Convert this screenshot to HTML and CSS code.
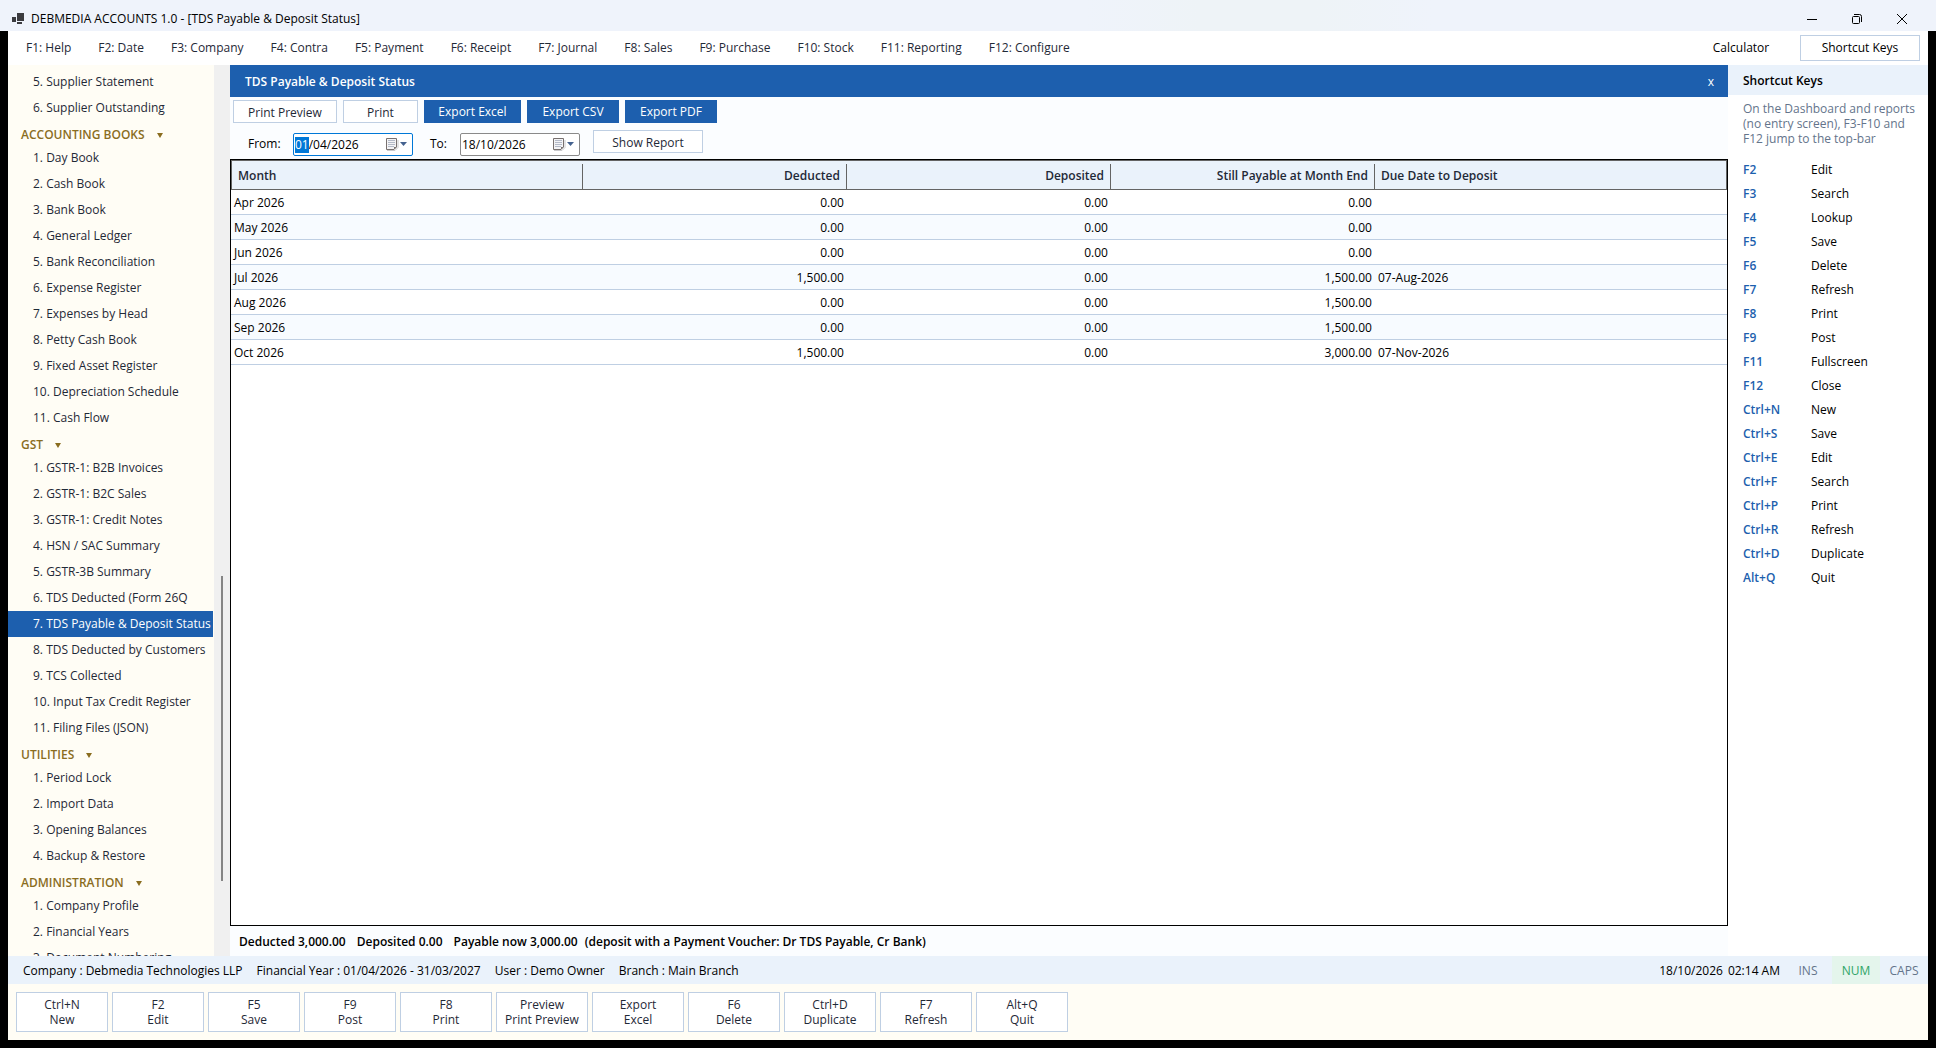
FILE: index.html
```html
<!DOCTYPE html>
<html lang="en">
<head>
<meta charset="utf-8">
<title>DEBMEDIA ACCOUNTS 1.0 - [TDS Payable &amp; Deposit Status]</title>
<link rel="stylesheet" href="styles.css">
</head>
<body>
<header class="titlebar">
  <svg class="app-icon" width="12" height="12" viewBox="0 0 12 12" aria-hidden="true"><path d="M0 4h4v5H0zM5 0h7v8H5zM5 9h5v2H5z" fill="#3b3b3f"/></svg>
  <h1 class="app-title">DEBMEDIA ACCOUNTS 1.0 - [TDS Payable &amp; Deposit Status]</h1>
  <button class="win-btn" type="button" aria-label="Minimize"><svg width="12" height="12" viewBox="0 0 12 12"><path d="M1 6.5h10" stroke="#000" fill="none"/></svg></button>
  <button class="win-btn" type="button" aria-label="Restore"><svg width="12" height="12" viewBox="0 0 12 12"><path d="M3 1.500H8.500Q10.500 1.500 10.500 3.500V9M2.500 3.500h5q1 0 1 1v5q0 1-1 1h-5q-1 0-1-1v-5q0-1 1-1z" stroke="#000" fill="none"/></svg></button>
  <button class="win-btn" type="button" aria-label="Close"><svg width="12" height="12" viewBox="0 0 12 12"><path d="M1 1l10 10M11 1L1 11" stroke="#000" fill="none"/></svg></button>
</header>

<div class="window">
  <nav class="menubar" aria-label="Main menu">
    <button type="button" class="menu-item">F1: Help</button>
    <button type="button" class="menu-item">F2: Date</button>
    <button type="button" class="menu-item">F3: Company</button>
    <button type="button" class="menu-item">F4: Contra</button>
    <button type="button" class="menu-item">F5: Payment</button>
    <button type="button" class="menu-item">F6: Receipt</button>
    <button type="button" class="menu-item">F7: Journal</button>
    <button type="button" class="menu-item">F8: Sales</button>
    <button type="button" class="menu-item">F9: Purchase</button>
    <button type="button" class="menu-item">F10: Stock</button>
    <button type="button" class="menu-item">F11: Reporting</button>
    <button type="button" class="menu-item">F12: Configure</button>
    <button type="button" class="tool-item">Calculator</button>
    <button type="button" class="tool-item tool-item-active">Shortcut Keys</button>
  </nav>

  <div class="workspace">
    <aside class="sidebar">
      <nav class="tree" aria-label="Reports">
        <a class="leaf" href="#">5. Supplier Statement</a>
        <a class="leaf" href="#">6. Supplier Outstanding</a>
        <button type="button" class="group">ACCOUNTING BOOKS<span class="caret"></span></button>
        <a class="leaf" href="#">1. Day Book</a>
        <a class="leaf" href="#">2. Cash Book</a>
        <a class="leaf" href="#">3. Bank Book</a>
        <a class="leaf" href="#">4. General Ledger</a>
        <a class="leaf" href="#">5. Bank Reconciliation</a>
        <a class="leaf" href="#">6. Expense Register</a>
        <a class="leaf" href="#">7. Expenses by Head</a>
        <a class="leaf" href="#">8. Petty Cash Book</a>
        <a class="leaf" href="#">9. Fixed Asset Register</a>
        <a class="leaf" href="#">10. Depreciation Schedule</a>
        <a class="leaf" href="#">11. Cash Flow</a>
        <button type="button" class="group">GST<span class="caret"></span></button>
        <a class="leaf" href="#">1. GSTR-1: B2B Invoices</a>
        <a class="leaf" href="#">2. GSTR-1: B2C Sales</a>
        <a class="leaf" href="#">3. GSTR-1: Credit Notes</a>
        <a class="leaf" href="#">4. HSN / SAC Summary</a>
        <a class="leaf" href="#">5. GSTR-3B Summary</a>
        <a class="leaf" href="#">6. TDS Deducted (Form 26Q</a>
        <a class="leaf leaf-active" href="#" aria-current="page">7. TDS Payable &amp; Deposit Status</a>
        <a class="leaf" href="#">8. TDS Deducted by Customers</a>
        <a class="leaf" href="#">9. TCS Collected</a>
        <a class="leaf" href="#">10. Input Tax Credit Register</a>
        <a class="leaf" href="#">11. Filing Files (JSON)</a>
        <button type="button" class="group">UTILITIES<span class="caret"></span></button>
        <a class="leaf" href="#">1. Period Lock</a>
        <a class="leaf" href="#">2. Import Data</a>
        <a class="leaf" href="#">3. Opening Balances</a>
        <a class="leaf" href="#">4. Backup &amp; Restore</a>
        <button type="button" class="group">ADMINISTRATION<span class="caret"></span></button>
        <a class="leaf" href="#">1. Company Profile</a>
        <a class="leaf" href="#">2. Financial Years</a>
        <a class="leaf" href="#">3. Document Numbering</a>
      </nav>
      <div class="scroll-track"><div class="scroll-thumb"></div></div>
    </aside>

    <main class="report">
      <div class="report-head">
        <h2 class="report-title">TDS Payable &amp; Deposit Status</h2>
        <button type="button" class="report-close" aria-label="Close report">x</button>
      </div>
      <div class="toolbar">
        <button type="button" class="btn btn-wide">Print Preview</button>
        <button type="button" class="btn btn-small">Print</button>
        <button type="button" class="btn btn-primary btn-excel">Export Excel</button>
        <button type="button" class="btn btn-primary">Export CSV</button>
        <button type="button" class="btn btn-primary">Export PDF</button>
      </div>
      <form class="filters">
        <label class="filter-label" for="from">From:</label>
        <div class="date date-focus">
          <input class="date-input" id="from" type="text" value="01/04/2026">
          <button type="button" class="date-drop" aria-label="Choose from date"><svg width="22" height="15" viewBox="0 0 22 15"><path d="M2 13.500h8l3-3V3" stroke="#c9c9cc" fill="none"/><path d="M1.500 1.500h10v8.500l-2.500 2.500h-7.500z" fill="#f3f3f5" stroke="#77706f"/><path d="M3 3h7v1H3zM3 5h7v1H3zM3 7h7v1H3zM3 9h6v1H3z" fill="#b4bac8"/><path d="M9 12.500V10h2.500z" fill="#77706f"/><path d="M15 5h7l-3.500 4z" fill="#44628f"/></svg></button>
        </div>
        <label class="filter-label" for="to">To:</label>
        <div class="date">
          <input class="date-input" id="to" type="text" value="18/10/2026">
          <button type="button" class="date-drop" aria-label="Choose to date"><svg width="22" height="15" viewBox="0 0 22 15"><path d="M2 13.500h8l3-3V3" stroke="#c9c9cc" fill="none"/><path d="M1.500 1.500h10v8.500l-2.500 2.500h-7.500z" fill="#f3f3f5" stroke="#77706f"/><path d="M3 3h7v1H3zM3 5h7v1H3zM3 7h7v1H3zM3 9h6v1H3z" fill="#b4bac8"/><path d="M9 12.500V10h2.500z" fill="#77706f"/><path d="M15 5h7l-3.500 4z" fill="#44628f"/></svg></button>
        </div>
        <button type="button" class="btn btn-show">Show Report</button>
      </form>
      <div class="grid">
        <table class="table">
          <colgroup><col class="col-outer"><col class="col-amount"><col class="col-amount"><col class="col-amount"><col class="col-outer"></colgroup>
          <thead>
            <tr><th scope="col">Month</th><th scope="col" class="num">Deducted</th><th scope="col" class="num">Deposited</th><th scope="col" class="num">Still Payable at Month End</th><th scope="col">Due Date to Deposit</th></tr>
          </thead>
          <tbody>
            <tr><td>Apr 2026</td><td class="num">0.00</td><td class="num">0.00</td><td class="num">0.00</td><td></td></tr>
            <tr><td>May 2026</td><td class="num">0.00</td><td class="num">0.00</td><td class="num">0.00</td><td></td></tr>
            <tr><td>Jun 2026</td><td class="num">0.00</td><td class="num">0.00</td><td class="num">0.00</td><td></td></tr>
            <tr><td>Jul 2026</td><td class="num">1,500.00</td><td class="num">0.00</td><td class="num">1,500.00</td><td>07-Aug-2026</td></tr>
            <tr><td>Aug 2026</td><td class="num">0.00</td><td class="num">0.00</td><td class="num">1,500.00</td><td></td></tr>
            <tr><td>Sep 2026</td><td class="num">0.00</td><td class="num">0.00</td><td class="num">1,500.00</td><td></td></tr>
            <tr><td>Oct 2026</td><td class="num">1,500.00</td><td class="num">0.00</td><td class="num">3,000.00</td><td>07-Nov-2026</td></tr>
          </tbody>
        </table>
      </div>
      <div class="totals">
        <span>Deducted 3,000.00</span>
        <span>Deposited 0.00</span>
        <span>Payable now 3,000.00</span>
        <span class="totals-note">(deposit with a Payment Voucher: Dr TDS Payable, Cr Bank)</span>
      </div>
    </main>

    <aside class="shortcuts">
      <h2 class="shortcuts-title">Shortcut Keys</h2>
      <p class="shortcuts-hint">On the Dashboard and reports (no entry screen), F3-F10 and F12 jump to the top-bar</p>
      <dl class="keys">
        <dt>F2</dt><dd>Edit</dd>
        <dt>F3</dt><dd>Search</dd>
        <dt>F4</dt><dd>Lookup</dd>
        <dt>F5</dt><dd>Save</dd>
        <dt>F6</dt><dd>Delete</dd>
        <dt>F7</dt><dd>Refresh</dd>
        <dt>F8</dt><dd>Print</dd>
        <dt>F9</dt><dd>Post</dd>
        <dt>F11</dt><dd>Fullscreen</dd>
        <dt>F12</dt><dd>Close</dd>
        <dt>Ctrl+N</dt><dd>New</dd>
        <dt>Ctrl+S</dt><dd>Save</dd>
        <dt>Ctrl+E</dt><dd>Edit</dd>
        <dt>Ctrl+F</dt><dd>Search</dd>
        <dt>Ctrl+P</dt><dd>Print</dd>
        <dt>Ctrl+R</dt><dd>Refresh</dd>
        <dt>Ctrl+D</dt><dd>Duplicate</dd>
        <dt>Alt+Q</dt><dd>Quit</dd>
      </dl>
    </aside>
  </div>

  <div class="statusbar">
    <span>Company : Debmedia Technologies LLP</span>
    <span>Financial Year : 01/04/2026 - 31/03/2027</span>
    <span>User : Demo Owner</span>
    <span>Branch : Main Branch</span>
    <div class="status-right">
      <span class="clock"><span>18/10/2026</span><span>02:14 AM</span></span>
      <span class="lock">INS</span>
      <span class="lock lock-on">NUM</span>
      <span class="lock">CAPS</span>
    </div>
  </div>

  <footer class="actions">
    <button type="button" class="action">Ctrl+N<br>New</button>
    <button type="button" class="action">F2<br>Edit</button>
    <button type="button" class="action">F5<br>Save</button>
    <button type="button" class="action">F9<br>Post</button>
    <button type="button" class="action">F8<br>Print</button>
    <button type="button" class="action">Preview<br>Print Preview</button>
    <button type="button" class="action">Export<br>Excel</button>
    <button type="button" class="action">F6<br>Delete</button>
    <button type="button" class="action">Ctrl+D<br>Duplicate</button>
    <button type="button" class="action">F7<br>Refresh</button>
    <button type="button" class="action">Alt+Q<br>Quit</button>
  </footer>
</div>
<script src="app.js"></script>
</body>
</html>
```
FILE: app.js
```js
// Start with the day part of the From date selected, ready to type over.
const from = document.getElementById("from");
from.focus();
from.setSelectionRange(0, 2);
```
FILE: styles.css
```css
:root {
  --blue: #1d5fae;
  --pale: #eaf2fb;
  --line: #bfcfe3;
  --ink: #1f2937;
  --cream: #fffdf5;
  --gold: #8a6d1f;
  --muted: #64748b;
}

* { box-sizing: border-box; }

body {
  margin: 0;
  height: 100vh;
  display: flex;
  flex-direction: column;
  background: #000;
  color: #000;
  font: 12px/16px "Open Sans", "Noto Sans", sans-serif;
}

h1, h2, p, dl, dd { margin: 0; }
h1, h2 { font-size: 12px; }

button {
  font: inherit;
  color: inherit;
  padding: 0;
  border: 0;
  background: none;
  white-space: nowrap;
}

.titlebar {
  flex: none;
  height: 31px;
  display: flex;
  align-items: center;
  padding: 6px 12px 0 12px;
  background: linear-gradient(90deg, #eff3fb 56%, #eef3f7 62%, #eef3f7 68%, #eff3fb 74%);
}
.app-icon { margin-right: 7px; }
.app-title { flex: 1; padding-top: 1px; font-weight: 400; }
.win-btn { width: 45px; height: 24px; display: grid; place-items: center; }

.window {
  flex: 1;
  min-height: 0;
  margin: 0 8px 8px;
  display: flex;
  flex-direction: column;
  background: #fff;
}

.menubar {
  flex: none;
  height: 34px;
  display: flex;
  align-items: center;
  padding: 0 8px 0 18px;
  color: var(--ink);
}
.menu-item { margin-right: 27px; }
.tool-item { width: 120px; height: 26px; color: #000; border: 1px solid transparent; }
.menu-item + .tool-item { margin-left: auto; width: 118px; }
.tool-item-active { border-color: var(--line); background: #fff; }

.workspace { flex: 1; min-height: 0; display: flex; }

.sidebar { flex: none; width: 222px; display: flex; overflow: hidden; }
.tree { flex: 1; padding: 4px 1px 0 0; background: var(--cream); overflow: hidden; }
.leaf {
  display: block;
  height: 26px;
  padding-left: 25px;
  line-height: 26px;
  color: var(--ink);
  text-decoration: none;
  white-space: nowrap;
}
.leaf-active { background: var(--blue); color: #fff; }
.group {
  display: flex;
  align-items: center;
  height: 24px;
  padding: 4px 0 0 13px;
  color: var(--gold);
  font-weight: 600;
}
.caret {
  margin-left: 12px;
  border: 3px solid transparent;
  border-top: 5px solid var(--gold);
  border-bottom: 0;
}
.scroll-track { width: 16px; padding-top: 511px; background: #f0f0f0; }
.scroll-thumb { width: 2px; height: 305px; margin-left: 7px; background: #858585; }

.report { flex: 1; min-width: 0; display: flex; flex-direction: column; background: #fbfdff; }
.report-head {
  flex: none;
  height: 32px;
  display: flex;
  align-items: center;
  justify-content: space-between;
  padding: 2px 14px 0 15px;
  background: var(--blue);
  color: #fff;
}
.report-title { font-weight: 600; }

.toolbar { display: flex; gap: 6px; padding: 3px 3px 7px; }
.btn { width: 92px; height: 23px; padding-top: 2px; border: 1px solid var(--line); background: #fff; color: var(--ink); }
.btn-wide { width: 104px; }
.btn-small { width: 75px; }
.btn-primary { padding-top: 0; border-color: var(--blue); background: var(--blue); color: #fff; }
.btn-excel { width: 97px; }
.btn-show { width: 110px; margin-left: 13px; }

.filters { display: flex; height: 29px; padding-left: 1px; }
.filter-label { width: 30px; margin-left: 17px; padding-top: 6px; }
.filter-label:first-child { width: 45px; }
.date {
  display: flex;
  width: 120px;
  height: 23px;
  margin-top: 3px;
  border: 1px solid #8a8a8a;
  border-radius: 2px;
  background: #fff;
}
.date-focus { border-color: #0078d7; }
.date-input { flex: 1; min-width: 0; padding: 0 1px; border: 0; outline: 0; background: none; font: inherit; color: #000; }
.date-input::selection { background: #0078d7; color: #fff; }
.date-drop { width: 27px; display: grid; place-items: center start; }

.grid { flex: 1; min-height: 0; border: 1px solid #000; background: #fff; }
.table { width: 100%; table-layout: fixed; border-collapse: separate; border-spacing: 0; }
.col-outer { width: 23.529%; }
.col-amount { width: 17.647%; }
th, td { text-align: left; white-space: nowrap; overflow: hidden; }
th {
  height: 30px;
  padding: 2px 7px 0;
  border-top: 1px solid #646464;
  border-bottom: 1px solid #646464;
  background: linear-gradient(#646464, #646464) right 3px / 1px 25px no-repeat var(--pale);
  color: var(--ink);
  font-weight: 600;
}
th:first-child { border-left: 1px solid #646464; padding-left: 6px; }
th:last-child { border-right: 1px solid #646464; padding-left: 6px; background: var(--pale); }
td { height: 25px; padding: 2px 3px 0; border-bottom: 1px solid var(--line); }
tr:nth-child(even) td { background: #f7fbff; }
.num { text-align: right; }

.totals { flex: none; height: 30px; display: flex; align-items: center; gap: 11px; padding: 1px 9px 0; font-weight: 600; }
.totals-note { margin-left: -4px; }

.shortcuts { flex: none; width: 200px; background: #fff; }
.shortcuts-title { height: 30px; padding-left: 15px; line-height: 32px; font-weight: 600; background: var(--pale); }
.shortcuts-hint { padding: 6px 8px 0 15px; line-height: 15px; color: var(--muted); }
.keys { display: grid; grid-template-columns: 68px 1fr; padding: 12px 0 0 15px; line-height: 24px; }
dt { color: var(--blue); font-weight: 600; }

.statusbar { flex: none; height: 28px; display: flex; align-items: center; gap: 14px; padding: 2px 0 0 15px; background: var(--pale); }
.status-right { margin: -2px 0 0 auto; height: 28px; display: flex; line-height: 30px; }
.clock { display: flex; gap: 5px; margin-right: 4px; }
.lock { width: 48px; text-align: center; color: var(--muted); }
.lock-on { background: #e4f5ec; color: #2fa567; }

.actions { flex: none; height: 56px; display: flex; gap: 4px; padding: 8px; background: var(--cream); }
.action { width: 92px; height: 40px; border: 1px solid var(--line); background: #fff; color: var(--ink); line-height: 15px; }
```
